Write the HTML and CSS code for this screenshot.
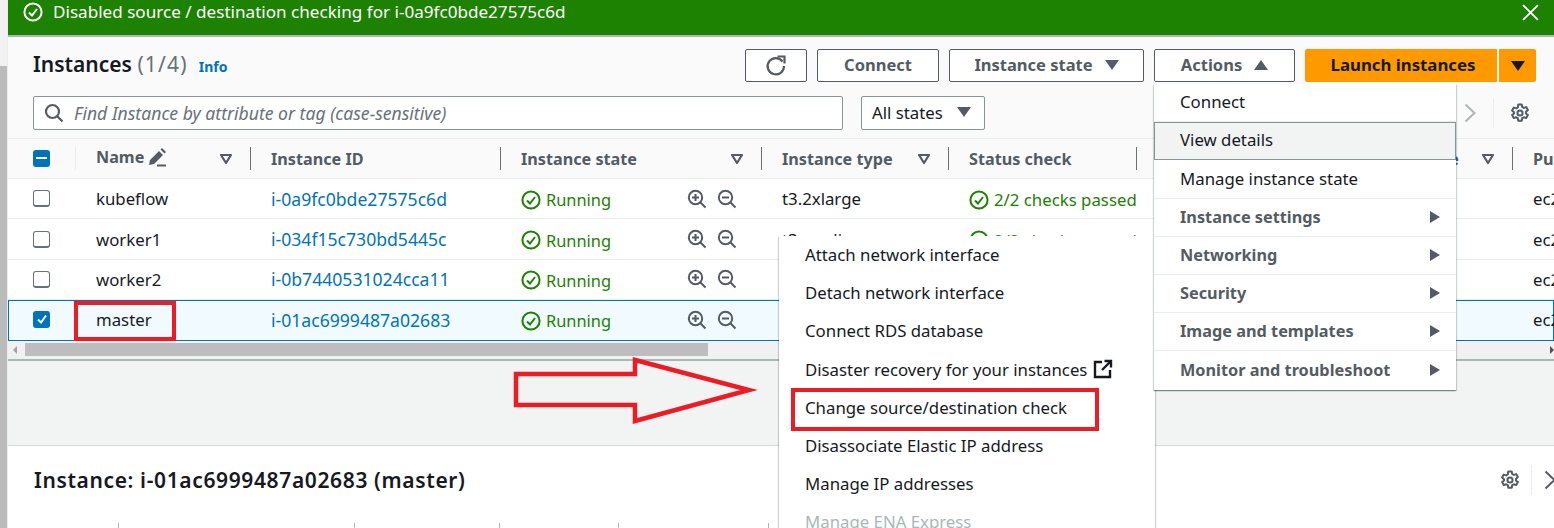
FILE: index.html
```html
<!DOCTYPE html>
<html lang="en">
<head>
    <meta charset="UTF-8">
    <meta name="viewport" content="width=device-width, initial-scale=1.0">
    <title>Instances</title>
    <link rel="stylesheet" href="styles.css">
</head>
<body>

    <svg class="defs" width="0" height="0">
        <symbol id="check" viewBox="0 0 20 20">
            <circle cx="10" cy="10" r="8.6" fill="none" stroke="currentColor" stroke-width="2"/>
            <path d="M6 10.500l3 3 5-6.500" fill="none" stroke="currentColor" stroke-width="2"/>
        </symbol>
        <symbol id="zoom-in" viewBox="0 0 20 20">
            <circle cx="8.500" cy="8.500" r="6.700" fill="none" stroke="currentColor" stroke-width="2"/>
            <path d="M13.500 13.500l5 5M5 8.500h7M8.500 5v7" fill="none" stroke="currentColor" stroke-width="2"/>
        </symbol>
        <symbol id="zoom-out" viewBox="0 0 20 20">
            <circle cx="8.500" cy="8.500" r="6.700" fill="none" stroke="currentColor" stroke-width="2"/>
            <path d="M13.500 13.500l5 5M5 8.500h7" fill="none" stroke="currentColor" stroke-width="2"/>
        </symbol>
        <symbol id="gear" viewBox="0 0 20 20">
            <path d="M8.300 1.500h3.400l.5 2.500 1.600.9 2.400-.8 1.700 3-1.900 1.700v1.600l1.900 1.700-1.700 3-2.400-.8-1.600.9-.5 2.500H8.300l-.5-2.500-1.600-.9-2.400.8-1.700-3 1.900-1.700V9.300L2.100 7.600l1.700-3 2.400.8 1.600-.9z" fill="none" stroke="currentColor" stroke-width="2" stroke-linejoin="round"/>
            <circle cx="10" cy="10" r="2.600" fill="none" stroke="currentColor" stroke-width="2"/>
        </symbol>
        <symbol id="filter" viewBox="0 0 14 12">
            <path d="M2 2h10l-5 8z" fill="none" stroke="currentColor" stroke-width="2.200" stroke-linejoin="round"/>
        </symbol>
    </svg>

    <div class="gutter"></div>

    <div class="page">

        <!-- Success flash -->
        <div class="flash">
            <svg class="flash-icon"><use href="#check"/></svg>
            <span>Disabled source / destination checking for i-0a9fc0bde27575c6d</span>
            <svg class="flash-close" viewBox="0 0 16 16"><path d="M1 1l14 14M15 1L1 15" fill="none" stroke="currentColor" stroke-width="1.800"/></svg>
        </div>

        <div class="list-panel">
            <div class="title-row">
                <h1>Instances <span class="count">(1/4)</span></h1>
                <a href="#" class="info">Info</a>
                <div class="actions">
                    <button class="btn btn-icon">
                        <svg width="22" height="22" viewBox="0 0 22 22"><path d="M17.500 6.500A8.200 8.200 0 1 0 19 11" fill="none" stroke="currentColor" stroke-width="2.200"/><path d="M12.500 1.500h7v7" fill="none" stroke="currentColor" stroke-width="2.200"/></svg>
                    </button>
                    <button class="btn btn-connect">Connect</button>
                    <button class="btn btn-state">Instance state <span class="tri-down"></span></button>
                    <button class="btn btn-actions">Actions <span class="tri-up"></span></button>
                    <div class="launch">
                        <button class="launch-main">Launch instances</button>
                        <button class="launch-more"><span class="tri-down dark"></span></button>
                    </div>
                </div>
            </div>

            <div class="search-row">
                <div class="search">
                    <svg width="20" height="20" viewBox="0 0 20 20"><circle cx="8.500" cy="8.500" r="6.500" fill="none" stroke="currentColor" stroke-width="2.200"/><path d="M13 13l5.500 5.500" fill="none" stroke="currentColor" stroke-width="2.200"/></svg>
                    <span>Find Instance by attribute or tag (case-sensitive)</span>
                </div>
                <div class="select">All states <span class="tri-down"></span></div>
                <div class="pager">
                    <svg class="pager-next" width="12" height="20" viewBox="0 0 12 20"><path d="M1.500 1.500l9 8.500-9 8.500" fill="none" stroke="currentColor" stroke-width="2"/></svg>
                    <span class="pager-sep"></span>
                    <svg class="pager-gear"><use href="#gear"/></svg>
                </div>
            </div>

            <div class="table">
                <div class="row head">
                    <div class="cell first"><span class="box minus"></span></div>
                    <div class="cell sep">
                        <span class="name-label">Name
                            <svg width="20" height="20" viewBox="0 0 20 20"><path d="M2 18l1-5 9-9 4 4-9 9zM13.500 2.500l1.500-1.500 4 4-1.500 1.500" fill="currentColor"/><path d="M10 18.500h9" fill="none" stroke="currentColor" stroke-width="2"/></svg>
                        </span>
                        <svg class="filter"><use href="#filter"/></svg>
                    </div>
                    <div class="cell sep">Instance ID</div>
                    <div class="cell sep">Instance state <svg class="filter"><use href="#filter"/></svg></div>
                    <div class="cell sep">Instance type <svg class="filter"><use href="#filter"/></svg></div>
                    <div class="cell sep">Status check</div>
                    <div class="cell sep"></div>
                    <div class="cell az">Availability Zone <svg class="filter"><use href="#filter"/></svg></div>
                    <div class="cell sep">Public IPv4 DNS</div>
                </div>

                <div class="row">
                    <div class="cell first"><span class="box"></span></div>
                    <div class="cell">kubeflow</div>
                    <div class="cell"><a href="#">i-0a9fc0bde27575c6d</a></div>
                    <div class="cell state"><svg class="ok"><use href="#check"/></svg><span class="ok-text">Running</span><svg class="zoom"><use href="#zoom-in"/></svg><svg class="zoom"><use href="#zoom-out"/></svg></div>
                    <div class="cell">t3.2xlarge</div>
                    <div class="cell status"><svg class="ok"><use href="#check"/></svg><span class="ok-text">2/2 checks passed</span></div>
                    <div class="cell"></div>
                    <div class="cell"></div>
                    <div class="cell">ec2-3-92-1</div>
                </div>
                <div class="row">
                    <div class="cell first"><span class="box"></span></div>
                    <div class="cell">worker1</div>
                    <div class="cell"><a href="#">i-034f15c730bd5445c</a></div>
                    <div class="cell state"><svg class="ok"><use href="#check"/></svg><span class="ok-text">Running</span><svg class="zoom"><use href="#zoom-in"/></svg><svg class="zoom"><use href="#zoom-out"/></svg></div>
                    <div class="cell">t3.medium</div>
                    <div class="cell status"><svg class="ok"><use href="#check"/></svg><span class="ok-text">2/2 checks passed</span></div>
                    <div class="cell"></div>
                    <div class="cell"></div>
                    <div class="cell">ec2-3-92-2</div>
                </div>
                <div class="row">
                    <div class="cell first"><span class="box"></span></div>
                    <div class="cell">worker2</div>
                    <div class="cell"><a href="#">i-0b7440531024cca11</a></div>
                    <div class="cell state"><svg class="ok"><use href="#check"/></svg><span class="ok-text">Running</span><svg class="zoom"><use href="#zoom-in"/></svg><svg class="zoom"><use href="#zoom-out"/></svg></div>
                    <div class="cell"></div>
                    <div class="cell"></div>
                    <div class="cell"></div>
                    <div class="cell"></div>
                    <div class="cell">ec2-3-92-3</div>
                </div>
                <div class="row selected">
                    <div class="cell first"><span class="box checked"><svg width="14" height="14" viewBox="0 0 14 14"><path d="M3 7.500l3 3 5-7" fill="none" stroke="#fff" stroke-width="2"/></svg></span></div>
                    <div class="cell">master</div>
                    <div class="cell"><a href="#">i-01ac6999487a02683</a></div>
                    <div class="cell state"><svg class="ok"><use href="#check"/></svg><span class="ok-text">Running</span><svg class="zoom"><use href="#zoom-in"/></svg><svg class="zoom"><use href="#zoom-out"/></svg></div>
                    <div class="cell"></div>
                    <div class="cell"></div>
                    <div class="cell"></div>
                    <div class="cell"></div>
                    <div class="cell">ec2-3-92-4</div>
                </div>
            </div>

            <div class="hscroll">
                <span class="arrow-left"></span>
                <span class="thumb"></span>
                <span class="arrow-right"></span>
            </div>
        </div>

        <div class="splitter"></div>

        <!-- Details -->
        <div class="detail">
            <div class="detail-head">
                <h2>Instance: i-01ac6999487a02683 (master)</h2>
                <svg class="detail-gear"><use href="#gear"/></svg>
                <span class="detail-sep"></span>
                <svg class="detail-next" width="12" height="20" viewBox="0 0 12 20"><path d="M1.500 1.500l9 8.500-9 8.500" fill="none" stroke="currentColor" stroke-width="2"/></svg>
            </div>
            <div class="tabs">
                <span class="tab tab-a"></span>
                <span class="tab tab-b"></span>
                <span class="tab tab-c"></span>
                <span class="tab tab-d"></span>
                <span class="tab tab-e"></span>
            </div>
        </div>
    </div>

    <!-- Actions dropdown -->
    <div class="menu menu-actions">
        <div class="item">Connect</div>
        <div class="item active">View details</div>
        <div class="item">Manage instance state</div>
        <div class="item group">Instance settings <span class="tri-right"></span></div>
        <div class="item group">Networking <span class="tri-right"></span></div>
        <div class="item group">Security <span class="tri-right"></span></div>
        <div class="item group">Image and templates <span class="tri-right"></span></div>
        <div class="item group">Monitor and troubleshoot <span class="tri-right"></span></div>
    </div>

    <!-- Networking submenu -->
    <div class="menu menu-network">
        <div class="item">Attach network interface</div>
        <div class="item">Detach network interface</div>
        <div class="item">Connect RDS database</div>
        <div class="item">Disaster recovery for your instances
            <svg class="ext" width="20" height="20" viewBox="0 0 20 20"><path d="M9 3H2v15h15v-7M11.500 2H18v6.500M18 2l-9 9" fill="none" stroke="currentColor" stroke-width="2.400"/></svg>
        </div>
        <div class="item">Change source/destination check</div>
        <div class="item">Disassociate Elastic IP address</div>
        <div class="item">Manage IP addresses</div>
        <div class="item muted">Manage ENA Express</div>
    </div>

    <!-- Red annotations drawn on top of the screenshot -->
    <span class="mark mark-name"></span>
    <span class="mark mark-change"></span>
    <svg class="mark-arrow" width="260" height="80" viewBox="0 0 260 80">
        <path d="M3 19H122V5L236 35 122 66V50H3z" fill="none" stroke="#ed1c24" stroke-width="4.500"/>
    </svg>

</body>
</html>
```

FILE: styles.css
```css
* {
    box-sizing: border-box;
}

body {
    font-family: "Noto Sans", sans-serif;
    font-size: 16.8px;
    color: #16191f;
    background: #fff;
    margin: 0;
    width: 1554px;
    height: 528px;
    overflow: hidden;
    display: flex;
}

.defs {
    position: absolute;
}

a {
    color: #0073bb;
    text-decoration: none;
}

/* Left page scrollbar */
.gutter {
    width: 8px;
    flex: none;
    background: linear-gradient(#f1f1f1 66px, #bbb 66px);
    border-right: 1px solid #eaeded;
}

.page {
    flex: 1;
    min-width: 0;
    display: flex;
    flex-direction: column;
}

/* Flash bar */
.flash {
    height: 38px;
    flex: none;
    margin-top: -1px;
    background: #1d8102;
    border-bottom: 2px solid #aab7b8;
    color: #fff;
    font-size: 17.1px;
    display: flex;
    align-items: center;
    padding: 0 15px 12px 15px;
}

.flash-icon {
    width: 20px;
    height: 20px;
    margin: 2px 10px 0 0;
}

.flash-close {
    width: 17px;
    height: 17px;
    margin: 2px 0 0 auto;
}

/* Instances list */
.list-panel {
    background: #fafafa;
    flex: none;
}

.title-row {
    display: flex;
    align-items: center;
    height: 33px;
    margin-top: 12px;
    padding: 0 18px 0 25px;
}

h1 {
    font-size: 21px;
    font-weight: 600;
    margin: 0 0 4px;
}

.count {
    font-weight: 400;
    color: #687078;
    letter-spacing: 1.2px;
}

.info {
    font-size: 14px;
    font-weight: 700;
    margin-left: 11px;
    padding-top: 1px;
}

.actions {
    margin-left: auto;
    display: flex;
    gap: 10px;
}

.btn {
    height: 33px;
    font-family: inherit;
    font-size: 16.5px;
    font-weight: 700;
    color: #545b64;
    background: #fff;
    border: 1px solid #545b64;
    border-radius: 2px;
    padding: 0 0 2px;
    display: flex;
    align-items: center;
    justify-content: center;
    gap: 12px;
}

.btn-icon {
    width: 62px;
    padding: 0;
}

.btn-connect {
    width: 122px;
}

.btn-state {
    width: 195px;
}

.btn-actions {
    width: 141px;
}

.launch {
    display: flex;
    gap: 2px;
}

.launch button {
    height: 33px;
    border: none;
    background: #f90;
    color: #16191f;
    font-family: inherit;
    font-size: 16.8px;
    font-weight: 700;
    padding: 0 0 2px 4px;
}

.launch-main {
    width: 192px;
    border-radius: 2px 0 0 2px;
}

.launch .launch-more {
    width: 37px;
    border-radius: 0 2px 2px 0;
    display: flex;
    align-items: center;
    justify-content: center;
    padding: 0;
}

.tri-down,
.tri-up {
    display: inline-block;
    width: 0;
    height: 0;
    border-left: 7px solid transparent;
    border-right: 7px solid transparent;
}

.tri-down {
    border-top: 10px solid #545b64;
}

.tri-down.dark {
    border-top-color: #16191f;
}

.tri-up {
    border-bottom: 10px solid #545b64;
}

.tri-right {
    width: 0;
    height: 0;
    border-top: 6px solid transparent;
    border-bottom: 6px solid transparent;
    border-left: 10px solid #545b64;
    margin-left: auto;
}

.search-row {
    display: flex;
    align-items: center;
    height: 34px;
    margin-top: 14px;
    padding-left: 25px;
}

.search {
    width: 810px;
    height: 34px;
    background: #fff;
    border: 1px solid #879596;
    border-radius: 2px;
    display: flex;
    align-items: center;
    gap: 10px;
    padding-left: 10px;
    color: #687078;
    font-size: 17.6px;
    font-style: italic;
}

.search svg {
    color: #545b64;
}

.select {
    width: 124px;
    height: 34px;
    margin-left: 18px;
    background: #fff;
    border: 1px solid #879596;
    border-radius: 2px;
    display: flex;
    align-items: center;
    justify-content: space-between;
    padding: 0 13px 2px 10px;
}

.pager {
    margin-left: auto;
    display: flex;
    align-items: center;
    padding-right: 24px;
}

.pager-next {
    color: #aab7b8;
}

.pager-sep {
    width: 1px;
    height: 30px;
    background: #eaeded;
    margin-left: 17px;
}

.pager-gear {
    width: 20px;
    height: 20px;
    color: #545b64;
    margin-left: 16px;
}

/* Table */
.table {
    margin-top: 8px;
}

.row {
    display: grid;
    grid-template-columns: 67px 175px 250px 261px 187px 188px 174px 202px 1fr;
    height: 40.4px;
    background: #fff;
    border-bottom: 1px solid #eaeded;
}

.row.head {
    height: 41px;
    background: #fafafa;
    border-top: 1px solid #eaeded;
    color: #545b64;
    font-size: 16.2px;
    font-weight: 700;
}

.row.selected {
    background: #f1faff;
    border-bottom: none;
    box-shadow: inset 0 0 0 1px #0073bb;
    padding-bottom: 1px;
}

.cell {
    display: flex;
    align-items: center;
    padding-left: 21px;
    white-space: nowrap;
    overflow: hidden;
    position: relative;
}

.cell.first {
    padding-left: 25px;
}

.cell a {
    font-size: 17.6px;
}

.cell.az {
    padding-left: 0;
    justify-content: flex-end;
    padding-right: 53px;
}

.sep::before {
    content: "";
    position: absolute;
    left: 0;
    top: 8px;
    bottom: 8px;
    width: 1px;
    background: #687078;
}

.row.head .cell:nth-child(2)::before {
    background: #eaeded;
}

.name-label {
    display: flex;
    align-items: center;
    gap: 3px;
    margin-top: -3px;
}

.filter {
    position: absolute;
    right: 17px;
    top: 14px;
    width: 14px;
    height: 12px;
}

.box {
    width: 17px;
    height: 17px;
    background: #fff;
    border: 1px solid #687078;
    border-bottom-width: 2px;
    border-radius: 3px;
    display: flex;
    align-items: center;
    justify-content: center;
}

.box.minus {
    background: #0073bb;
    border-color: #0073bb;
}

.box.minus::after {
    content: "";
    width: 11px;
    height: 2px;
    background: #fff;
}

.box.checked {
    background: #0073bb;
    border-color: #0073bb;
}

.state,
.status {
    color: #1d8102;
    padding-top: 2px;
}

.state .ok-text {
    font-size: 16.4px;
}

.ok {
    width: 20px;
    height: 20px;
    flex: none;
    margin-right: 5px;
}

.ok-text {
    width: 141px;
    flex: none;
}

.zoom {
    width: 20px;
    height: 20px;
    flex: none;
    color: #545b64;
    margin-right: 10px;
    margin-top: -2px;
}

.hscroll {
    height: 18px;
    background: #f1f1f1;
    display: flex;
    align-items: center;
    position: relative;
}

.thumb {
    width: 683px;
    height: 13px;
    margin-left: 17px;
    background: #bdbdbd;
}

.arrow-left {
    position: absolute;
    left: 5px;
    border-top: 4px solid transparent;
    border-bottom: 4px solid transparent;
    border-right: 4px solid #a3a3a3;
}

.arrow-right {
    position: absolute;
    right: 0;
    border-top: 4px solid transparent;
    border-bottom: 4px solid transparent;
    border-left: 4px solid #505050;
}

.splitter {
    height: 87px;
    flex: none;
    background: #f2f3f3;
    border-top: 2px solid #aab7b8;
    border-bottom: 1px solid #d5dbdb;
}

/* Detail panel */
.detail {
    flex: 1;
    background: #fff;
    position: relative;
}

.detail-head {
    display: flex;
    align-items: center;
    height: 24px;
    margin-top: 22px;
    padding-left: 26px;
}

h2 {
    font-size: 21px;
    font-weight: 600;
    letter-spacing: 0.63px;
    margin: 0;
}

.detail-gear {
    width: 20px;
    height: 20px;
    margin-left: auto;
    color: #545b64;
}

.detail-sep {
    width: 1px;
    height: 30px;
    background: #eaeded;
    margin-left: 11px;
}

.detail-next {
    color: #545b64;
    margin: 0 -2px 0 12px;
    flex: none;
}

.tab {
    position: absolute;
    bottom: 0;
    width: 1px;
    height: 5px;
    background: #aab7b8;
}

.tab-a { left: 110px; }
.tab-b { left: 346px; }
.tab-c { left: 491px; }
.tab-d { left: 610px; }
.tab-e { left: 760px; }

/* Dropdown menus */
.menu {
    position: absolute;
    background: #fff;
    box-shadow: 0 1px 1px 0 rgba(0, 28, 36, 0.3), 1px 1px 1px 0 rgba(0, 28, 36, 0.15), -1px 1px 1px 0 rgba(0, 28, 36, 0.15);
}

.menu-actions {
    left: 1154px;
    top: 84px;
    width: 302px;
    z-index: 2;
}

.menu-network {
    left: 779px;
    top: 236px;
    width: 376px;
    height: 300px;
    z-index: 1;
}

.item {
    height: 38.2px;
    display: flex;
    align-items: center;
    padding: 0 0 1px 26px;
    white-space: nowrap;
}

.menu-actions .item {
    border-bottom: 1px solid #eaeded;
    padding-right: 16px;
}

.menu-actions .item:first-child {
    padding-bottom: 2px;
}

.menu-actions .item:last-child {
    border-bottom: none;
}

.item.group {
    color: #545b64;
    font-size: 16.3px;
    font-weight: 700;
}

.item.active {
    background: #f2f3f3;
    border: 1px solid #879596;
    padding: 0 0 3px 25px;
}

.item.muted {
    color: #aab7b8;
}

.ext {
    margin-left: 6px;
}

/* Annotations */
.mark {
    position: absolute;
    border: 4px solid #ed1c24;
    z-index: 3;
}

.mark-name {
    left: 74px;
    top: 301px;
    width: 102px;
    height: 40px;
}

.mark-change {
    left: 791px;
    top: 388px;
    width: 308px;
    height: 43px;
}

.mark-arrow {
    position: absolute;
    left: 513px;
    top: 355px;
    z-index: 3;
}
```
